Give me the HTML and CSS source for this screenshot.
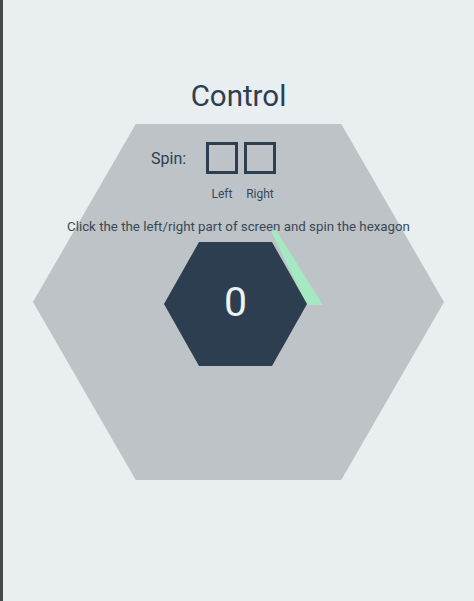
FILE: index.html
```html
<!DOCTYPE html>
<html lang="en">
<head>
<meta charset="utf-8">
<title>Control</title>
<link rel="stylesheet" href="styles.css">
</head>
<body>
<main class="page">
  <h1 class="title">Control</h1>
  <section class="stage">
    <div class="spin-row">
      <span class="spin-label">Spin:</span>
      <div class="boxes">
        <span class="box"></span>
        <span class="box"></span>
      </div>
    </div>
    <div class="dir-row">
      <span class="dir">Left</span>
      <span class="dir">Right</span>
    </div>
    <p class="hint">Click the the left/right part of screen and spin the hexagon</p>
    <div class="hex-wrap">
      <svg class="hex-svg" width="160" height="138" viewBox="0 0 160 138" aria-hidden="true">
        <polygon class="edge" points="107,2 112,1 159,76 143,76"/>
        <polygon class="core" points="35,13 108,13 143,75 108,137 35,137 0,75"/>
      </svg>
      <span class="score">0</span>
    </div>
  </section>
</main>
</body>
</html>
```

FILE: styles.css
```css
html {
  background: #e9eef0;
}

body {
  margin: 0;
  min-height: 601px;
  border-left: 3px solid #434a4c;
  background: #e9eef0;
  font-family: Roboto, "Liberation Sans", sans-serif;
  color: #2c3e50;
}

.page {
  display: flex;
  flex-direction: column;
}

.title {
  margin: 0;
  padding-top: 79px;
  font-size: 29.5px;
  line-height: 34px;
  font-weight: 400;
  text-align: center;
  color: #2c3e50;
}

.stage {
  position: relative;
  width: 411px;
  height: 356px;
  margin: 11px 0 0 30px;
  display: flex;
  flex-direction: column;
}

.stage::before {
  content: "";
  position: absolute;
  inset: 0;
  background: #bdc3c7;
  clip-path: polygon(25% 0, 75% 0, 100% 50%, 75% 100%, 25% 100%, 0 50%);
  z-index: 0;
}

.stage > * {
  position: relative;
  z-index: 1;
}

.spin-row {
  display: flex;
  align-items: center;
  margin-top: 18px;
  padding-left: 118px;
}

.spin-label {
  width: 55px;
  font-size: 16px;
  color: #2c3e50;
}

.boxes {
  display: flex;
  gap: 6px;
}

.box {
  width: 32px;
  height: 32px;
  box-sizing: border-box;
  border: 3px solid #2c3e50;
}

.dir-row {
  display: flex;
  gap: 6px;
  margin-top: 13px;
  padding-left: 173px;
}

.dir {
  width: 32px;
  text-align: center;
  font-size: 12px;
  line-height: 14px;
  color: #34495e;
  white-space: nowrap;
}

.hint {
  margin: 18px 0 0;
  font-size: 13.3px;
  line-height: 15px;
  text-align: center;
  color: #3a4855;
  white-space: nowrap;
}

.hex-wrap {
  display: grid;
  width: 160px;
  height: 138px;
  margin: -5px 0 0 131px;
}

.hex-svg {
  grid-area: 1 / 1;
  display: block;
}

.edge {
  fill: #a3e9c1;
}

.core {
  fill: #2c3e50;
}

.score {
  grid-area: 1 / 1;
  width: 143px;
  height: 138px;
  padding-top: 8px;
  box-sizing: border-box;
  display: flex;
  align-items: center;
  justify-content: center;
  font-size: 41px;
  color: #eef2f3;
}
```
